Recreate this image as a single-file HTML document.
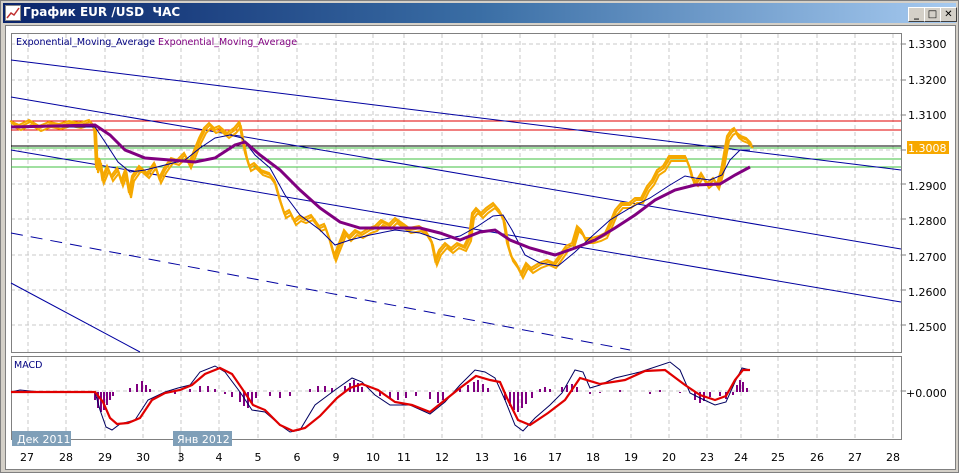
<!DOCTYPE html>
<html><head><meta charset="utf-8"><style>
html,body{margin:0;padding:0;width:959px;height:473px;overflow:hidden;background:#d4d0c8;font-family:"DejaVu Sans","Liberation Sans",sans-serif}
.win{position:absolute;left:0;top:0;width:957px;height:471px;border:1px solid #808080;background:#d4d0c8}
.title{position:absolute;left:2px;top:2px;width:953px;height:20px;background:linear-gradient(to right,#0a246a,#3a6ea5 50%,#a6caf0)}
.title span{position:absolute;left:20px;top:2px;color:#fff;font:bold 12px "DejaVu Sans",sans-serif}
.btn{position:absolute;top:4px;width:15px;height:13px;background:#d4d0c8;border:1px solid;border-color:#fff #404040 #404040 #fff;font:bold 10px "DejaVu Sans";text-align:center;line-height:13px;color:#000}
.client{position:absolute;left:4px;top:24px;width:949px;height:443px;background:#fff;border:1px solid #808080}
</style></head><body>
<div class="win">
<div class="title"><svg style="position:absolute;left:2px;top:2px" width="16" height="16"><rect x="0.5" y="0.5" width="15" height="15" fill="#fff" stroke="#888"/><polyline points="2,13 6,8 9,10 14,3" fill="none" stroke="#c03030" stroke-width="1.5"/></svg><span>График EUR /USD &nbsp;ЧАС</span>
<div class="btn" style="left:905px">_</div><div class="btn" style="left:921px">□</div><div class="btn" style="left:937px">✕</div></div>
<div class="client"></div>
</div>
<svg style="position:absolute;left:0;top:0" width="959" height="473" font-family="DejaVu Sans, Liberation Sans, sans-serif">
<defs><polyline id="pr" fill="none" stroke="#f5a800" stroke-width="2" points="11,123 20,127 30,122 40,128 50,124 60,126 70,123 80,125 90,122 95,128 97,170 100,160 103,180 108,168 112,178 118,170 122,183 126,172 130,195 133,178 140,168 148,175 155,165 160,180 165,170 172,160 178,162 185,155 190,165 196,150 200,140 205,130 210,125 215,130 220,128 228,135 235,130 240,124 243,140 246,155 250,168 255,165 262,172 270,175 275,182 280,200 285,215 290,212 295,222 300,218 305,220 312,217 320,228 325,226 330,240 335,258 338,250 342,240 345,232 350,238 356,232 362,235 370,230 376,228 382,222 390,226 396,220 403,225 410,230 420,228 426,232 432,242 436,262 440,252 446,245 452,250 458,245 465,248 470,238 473,215 477,210 482,215 487,210 494,205 500,212 504,220 508,245 512,258 517,265 522,275 527,265 532,270 540,265 548,262 555,265 560,258 567,248 573,245 578,228 582,232 586,240 593,240 600,238 606,235 612,222 616,212 622,205 630,205 636,200 642,200 648,188 653,182 658,172 664,168 670,158 678,158 686,158 690,168 693,180 697,183 702,175 708,185 714,180 718,186 722,172 725,155 728,138 732,132 735,130 738,135 742,138 747,140 752,145"/></defs>
<g stroke="#c8c8c8" stroke-dasharray="4,3" stroke-width="1">
<path d="M28 34V352M66 34V352M105 34V352M143 34V352M181 34V352M219 34V352M258 34V352M297 34V352M336 34V352M373 34V352M404 34V352M442 34V352M482 34V352M520 34V352M555 34V352M593 34V352M631 34V352M669 34V352M707 34V352M741 34V352M778 34V352M817 34V352M855 34V352M893 34V352"/>
<path d="M28 357V439M66 357V439M105 357V439M143 357V439M181 357V439M219 357V439M258 357V439M297 357V439M336 357V439M373 357V439M404 357V439M442 357V439M482 357V439M520 357V439M555 357V439M593 357V439M631 357V439M669 357V439M707 357V439M741 357V439M778 357V439M817 357V439M855 357V439M893 357V439"/>
<path d="M11 44H901M11 80H901M11 115H901M11 150H901M11 184H901M11 219H901M11 255H901M11 290H901M11 325H901M11 391H901"/>
</g>
<rect x="11.5" y="33.5" width="890" height="319" fill="none" stroke="#808080"/>
<rect x="11.5" y="356.5" width="890" height="83" fill="none" stroke="#808080"/>
<g stroke="#808080"><path d="M902 44h4M902 80h4M902 115h4M902 150h4M902 184h4M902 219h4M902 255h4M902 290h4M902 325h4M902 391h4"/></g>
<text x="16" y="45" font-size="9.5" fill="#000080">Exponential_Moving_Average <tspan fill="#800080">Exponential_Moving_Average</tspan></text>
<text x="14" y="368" font-size="9.5" fill="#000080">MACD</text>
<g font-size="11" fill="#000"><text x="908" y="48">1.3300</text><text x="908" y="84">1.3200</text><text x="908" y="119">1.3100</text><text x="908" y="190">1.2900</text><text x="908" y="225">1.2800</text><text x="908" y="261">1.2700</text><text x="908" y="296">1.2600</text><text x="908" y="331">1.2500</text><text x="906" y="397">+0.000</text></g>
<rect x="907" y="141" width="42" height="13" fill="#f7a800"/><text x="908" y="152" font-size="11" fill="#fff">1.3008</text>
<g stroke-width="1"><path d="M11 121H901M11 130H901" stroke="#e00000"/><path d="M11 146H901" stroke="#000"/><path d="M11 148H901M11 159H901M11 167H901" stroke="#40c040"/></g>
<g stroke="#0000a0" fill="none"><path d="M11 60L901 170M11 97L901 249M11 150L901 302M11 283L140 352"/><path d="M11 233L630 350" stroke-dasharray="12,8"/></g>
<use href="#pr"/><use href="#pr" transform="translate(1,3)"/><use href="#pr" transform="translate(-1,-2)"/>
<polyline fill="none" stroke="#000090" stroke-width="1" points="11,127 95,127 105,142 118,162 130,172 145,170 165,165 185,160 200,148 215,138 230,135 242,138 255,155 270,168 285,195 300,215 320,230 335,245 350,240 370,235 395,230 420,233 440,240 460,236 478,226 493,216 503,215 512,230 525,255 540,263 558,266 575,252 590,238 610,220 630,208 650,198 670,185 685,176 695,178 710,180 722,175 730,160 740,150 750,150"/>
<polyline fill="none" stroke="#800080" stroke-width="3" points="11,127 95,125 110,135 125,150 145,158 170,160 195,162 215,158 235,145 245,142 260,155 280,170 300,190 320,208 340,222 360,228 390,228 420,228 440,233 460,240 480,232 495,230 510,240 530,248 555,255 575,248 595,240 615,228 635,215 655,200 675,190 695,185 720,184 735,175 750,167"/>
<line x1="180" y1="440" x2="180" y2="462" stroke="#808080"/>
<g stroke="#800080" stroke-width="2"><path d="M95 392V400M98 392V408M101 392V412M104 392V410M107 392V405M110 392V400M113 392V396M130 392V388M137 392V384M142 392V381M146 392V385M150 392V389M165 392V394M175 392V394M190 392V389M200 392V386M208 392V386M215 392V389M225 392V394M232 392V397M240 392V402M244 392V406M248 392V408M252 392V404M256 392V398M270 392V396M280 392V398M290 392V396M310 392V389M318 392V386M325 392V386M332 392V388M345 392V386M350 392V383M354 392V380M358 392V383M362 392V387M380 392V396M390 392V398M398 392V400M406 392V398M416 392V396M430 392V399M438 392V403M443 392V400M460 392V389M468 392V385M474 392V382M478 392V380M483 392V384M488 392V388M505 392V400M510 392V406M514 392V410M518 392V412M522 392V408M526 392V404M532 392V398M540 392V389M545 392V387M550 392V389M562 392V387M567 392V385M572 392V384M577 392V387M590 392V394M600 392V393M620 392V390M650 392V394M660 392V390M680 392V393M695 392V400M700 392V403M704 392V401M710 392V397M720 392V396M726 392V399M733 392V395M737 392V385M740 392V380M743 392V382M747 392V388"/></g>
<polyline fill="none" stroke="#000060" stroke-width="1" points="11,392 20,390 40,392 95,392 100,410 106,427 112,430 120,424 135,420 148,400 165,392 178,388 190,385 200,372 215,366 225,372 240,392 252,410 265,412 280,425 290,432 300,430 315,405 335,390 352,378 362,382 375,395 390,405 410,405 430,414 445,402 460,385 475,370 485,372 495,378 505,400 515,425 523,431 535,418 550,405 562,393 575,370 583,372 590,388 600,385 615,378 640,372 670,362 680,370 690,393 700,398 715,405 726,402 735,382 742,368 750,370"/>
<polyline fill="none" stroke="#e00000" stroke-width="2.2" points="11,392 95,392 103,402 110,418 117,424 128,423 140,418 152,400 165,393 180,390 192,385 205,374 220,368 232,374 243,390 253,405 265,410 280,425 293,431 305,428 320,416 337,398 350,388 362,384 378,390 395,402 412,405 430,412 445,400 460,388 476,376 490,380 500,382 507,398 518,420 530,425 548,413 565,400 580,378 600,384 625,380 645,371 665,370 685,385 700,395 715,400 726,396 735,380 743,370 750,370"/>
<g font-size="11" fill="#000"><text x="27" y="461" text-anchor="middle">27</text><text x="66" y="461" text-anchor="middle">28</text><text x="105" y="461" text-anchor="middle">29</text><text x="143" y="461" text-anchor="middle">30</text><text x="181" y="461" text-anchor="middle">3</text><text x="219" y="461" text-anchor="middle">4</text><text x="258" y="461" text-anchor="middle">5</text><text x="297" y="461" text-anchor="middle">6</text><text x="336" y="461" text-anchor="middle">9</text><text x="373" y="461" text-anchor="middle">10</text><text x="404" y="461" text-anchor="middle">11</text><text x="442" y="461" text-anchor="middle">12</text><text x="482" y="461" text-anchor="middle">13</text><text x="520" y="461" text-anchor="middle">16</text><text x="555" y="461" text-anchor="middle">17</text><text x="593" y="461" text-anchor="middle">18</text><text x="631" y="461" text-anchor="middle">19</text><text x="669" y="461" text-anchor="middle">20</text><text x="707" y="461" text-anchor="middle">23</text><text x="741" y="461" text-anchor="middle">24</text><text x="778" y="461" text-anchor="middle">25</text><text x="817" y="461" text-anchor="middle">26</text><text x="855" y="461" text-anchor="middle">27</text><text x="893" y="461" text-anchor="middle">28</text></g>
<rect x="12" y="431" width="59" height="15" fill="#7f9fb8"/><text x="17" y="443" font-size="11" fill="#fff">Дек 2011</text>
<rect x="173" y="431" width="59" height="15" fill="#7f9fb8"/><text x="177" y="443" font-size="11" fill="#fff">Янв 2012</text>
</svg>
</body></html>
